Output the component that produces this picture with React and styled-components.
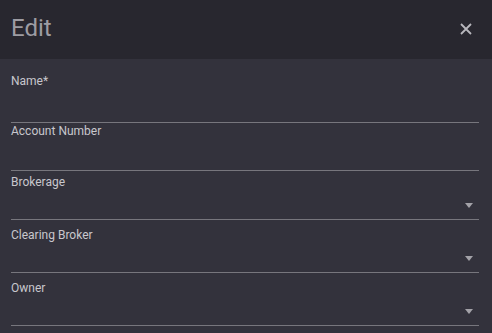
import React from "react";
import styled, { createGlobalStyle } from "styled-components";

const Global = createGlobalStyle`
  html, body { margin: 0; padding: 0; background: #33323c; }
  body { font-family: Roboto, "Noto Sans", sans-serif; }
`;

const Dialog = styled.div`
  width: 492px;
  height: 333px;
  background: #33323c;
  overflow: hidden;
`;

const Header = styled.div`
  height: 59px;
  background: #28272f;
  display: flex;
  align-items: center;
  justify-content: space-between;
  padding: 0 14px 0 11px;
  box-sizing: border-box;
`;

const Title = styled.h2`
  margin: 0;
  font-size: 24px;
  font-weight: 400;
  color: #9d9ca3;
  line-height: 28px;
  margin-top: -4px;
`;

const Close = styled.button`
  background: none;
  border: none;
  padding: 0;
  width: 24px;
  height: 24px;
  display: flex;
  align-items: center;
  justify-content: center;
  color: #b8b7bd;
  cursor: pointer;
  margin-top: -2px;
`;

const Body = styled.div`
  padding: 15px 13px 0 11px;
  display: flex;
  flex-direction: column;
`;

const Field = styled.div`
  display: flex;
  flex-direction: column;
  border-bottom: 1px solid #77767d;
  margin-top: ${(p) => p.$gap}px;
  position: relative;
`;

const Label = styled.label`
  font-size: 12px;
  font-weight: 400;
  color: #c8c7cd;
  line-height: 14px;
`;

const Input = styled.div`
  height: ${(p) => p.$h}px;
`;

const Arrow = styled.span`
  position: absolute;
  right: 6px;
  bottom: 11px;
  width: 0;
  height: 0;
  border-left: 4px solid transparent;
  border-right: 4px solid transparent;
  border-top: 5px solid #a3a2a8;
`;

const fields = [
  { label: "Name*", gap: 0, h: 34 },
  { label: "Account Number", gap: 1, h: 32 },
  { label: "Brokerage", gap: 4, h: 30, select: true },
  { label: "Clearing Broker", gap: 8, h: 30, select: true },
  { label: "Owner", gap: 8, h: 30, select: true },
];

export default function App() {
  return (
    <Dialog>
      <Global />
      <Header>
        <Title>Edit</Title>
        <Close aria-label="close">
          <svg width="12" height="12" viewBox="0 0 12 12">
            <path d="M1 1L11 11M11 1L1 11" stroke="currentColor" strokeWidth="1.8" />
          </svg>
        </Close>
      </Header>
      <Body>
        {fields.map((f) => (
          <Field key={f.label} $gap={f.gap}>
            <Label>{f.label}</Label>
            <Input $h={f.h} />
            {f.select && <Arrow />}
          </Field>
        ))}
      </Body>
    </Dialog>
  );
}
